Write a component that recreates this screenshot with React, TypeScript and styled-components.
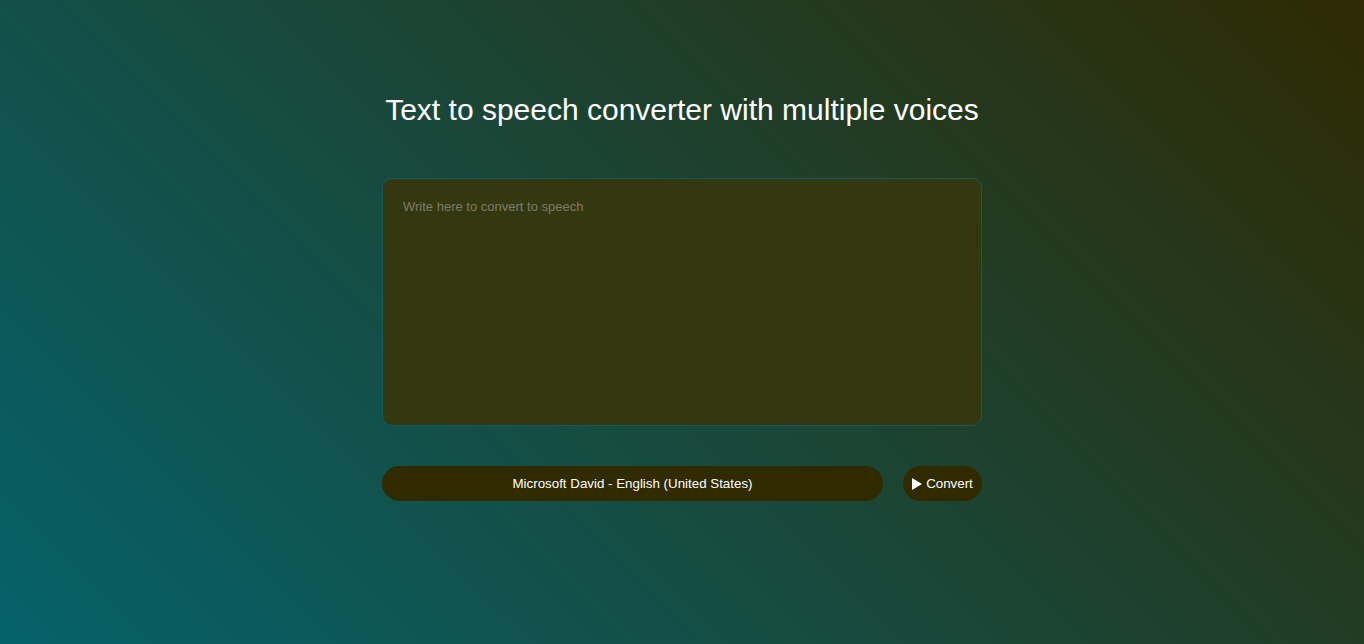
import React from "react";
import styled, { createGlobalStyle } from "styled-components";

const Global = createGlobalStyle`
  html, body { margin: 0; padding: 0; }
  body {
    font-family: "Liberation Sans", Arial, sans-serif;
    background: linear-gradient(45deg, #05626a, #2f2a03);
    min-height: 100vh;
    color: #fff;
  }
`;

const Page = styled.main`
  min-height: 100vh;
  display: flex;
  flex-direction: column;
  align-items: center;
  padding-top: 92px;
  box-sizing: border-box;
`;

const Title = styled.h1`
  margin: 0 0 51px;
  font-size: 30px;
  font-weight: 400;
  line-height: 35px;
  color: #fff;
`;

const TextArea = styled.textarea`
  width: 600px;
  height: 248px;
  box-sizing: border-box;
  background: #34380f;
  border: 1px solid #0f5a63;
  border-radius: 10px;
  padding: 20px;
  color: #fff;
  font-family: "Liberation Sans", Arial, sans-serif;
  font-size: 13px;
  resize: none;
  outline: none;
  margin: 0 0 40px;
  &::placeholder { color: #7c7c6a; }
`;

const Row = styled.div`
  width: 600px;
  display: flex;
  align-items: center;
  gap: 20px;
`;

const Select = styled.select`
  flex: 1;
  height: 35px;
  border: 0;
  outline: none;
  border-radius: 35px;
  background: #302a00;
  color: #fff;
  font-family: "Liberation Sans", Arial, sans-serif;
  font-size: 13.33px;
  text-align: center;
  text-align-last: center;
  appearance: none;
  padding: 0 20px;
`;

const Button = styled.button`
  height: 35px;
  width: 79px;
  border: 0;
  outline: none;
  border-radius: 35px;
  background: #302a00;
  color: #fff;
  font-family: "Liberation Sans", Arial, sans-serif;
  font-size: 13.33px;
  font-weight: 400;
  display: flex;
  align-items: center;
  justify-content: center;
  gap: 4px;
  padding: 0;
  cursor: pointer;
`;

export default function App() {
  return (
    <>
      <Global />
      <Page>
        <Title>Text to speech converter with multiple voices</Title>
        <TextArea placeholder="Write here to convert to speech" />
        <Row>
          <Select defaultValue="david">
            <option value="david">Microsoft David - English (United States)</option>
          </Select>
          <Button>
            <svg width="10" height="12" viewBox="0 0 10 12">
              <polygon points="0,0 10,6 0,12" fill="#fff" />
            </svg>
            Convert
          </Button>
        </Row>
      </Page>
    </>
  );
}
